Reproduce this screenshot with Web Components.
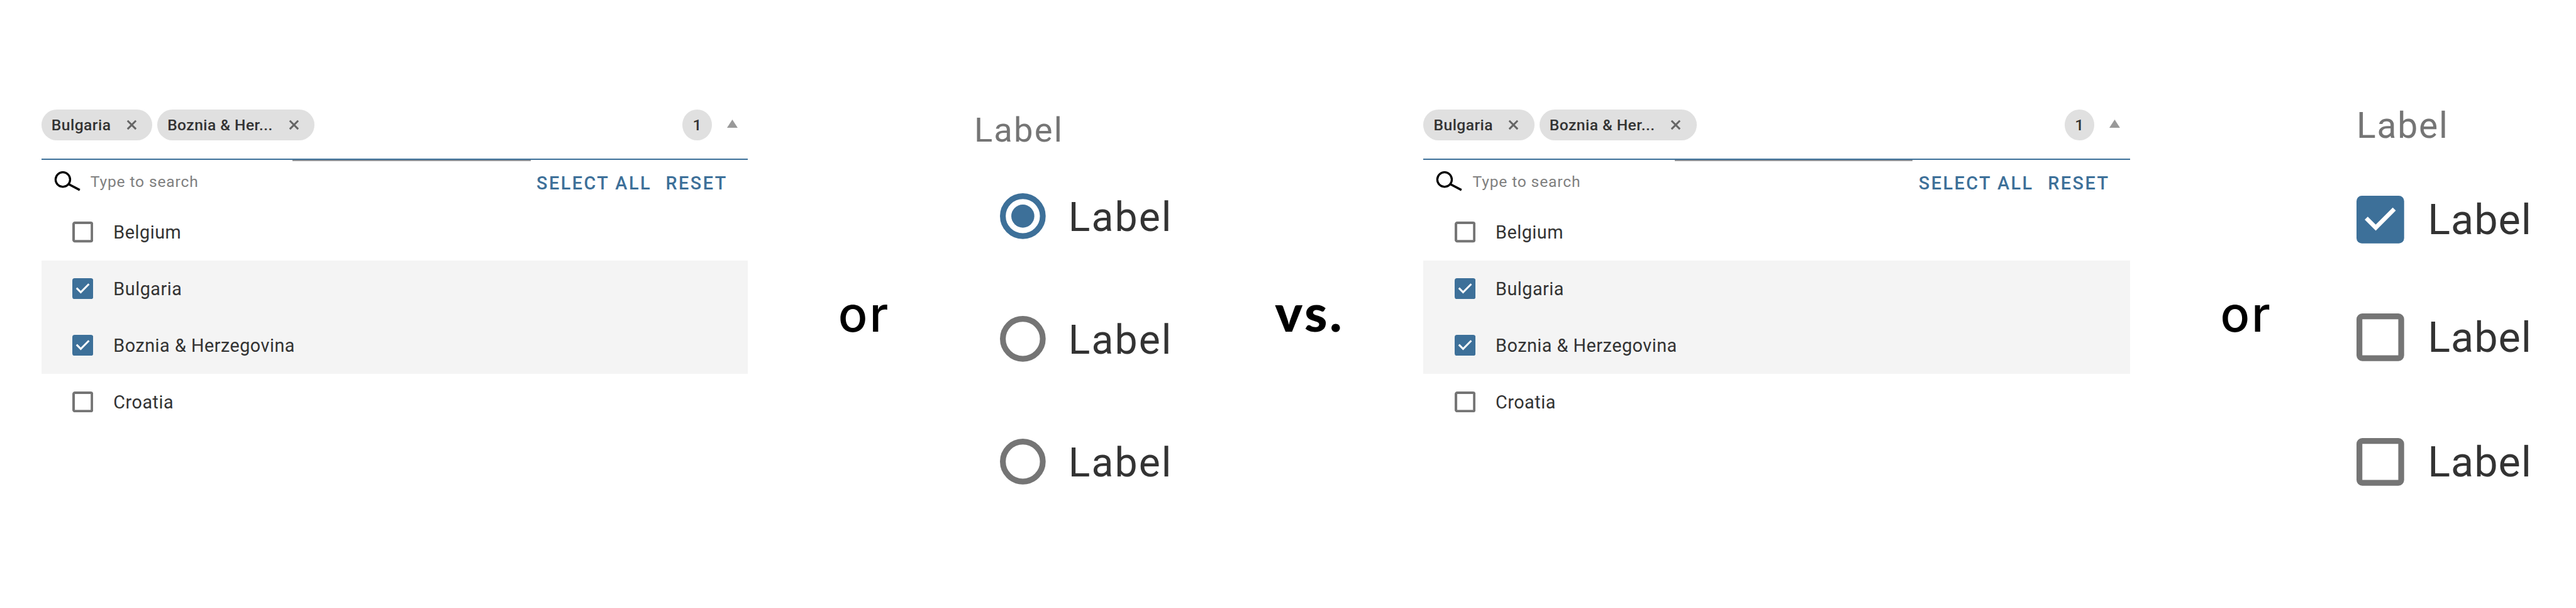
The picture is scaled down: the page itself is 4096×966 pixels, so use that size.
<!DOCTYPE html>
<html lang="en">
  <head>
    <meta charset="utf-8" />
    <title>Multiple vs. single selection</title>
    <style>
      html,
      body {
        margin: 0;
        background: #fff;
        overflow: hidden;
      }
      body {
        font-family: Roboto, sans-serif;
        color: #333;
        --primary: #3d7099;
        --outline: #757575;
      }
    </style>
  </head>
  <body>
    <comparison-board>
      <country-select></country-select>
      <join-word style="--left: 144px">or</join-word>
      <choice-group type="radio" style="--left: 137px"></choice-group>
      <join-word strong style="--left: 167.3px">vs.</join-word>
      <country-select style="--left: 132px"></country-select>
      <join-word style="--left: 144px">or</join-word>
      <choice-group type="checkbox" style="--left: 137.3px"></choice-group>
    </comparison-board>

    <script>
      class ComparisonBoard extends HTMLElement {
        constructor() {
          super();
          this.attachShadow({ mode: "open" }).innerHTML = `
            <style>
              :host {
                display: flex;
                align-items: flex-start;
                box-sizing: border-box;
                width: 4112px;
                height: 970px;
                padding-left: 66px;
                zoom: 0.99611;
              }
            </style>
            <slot></slot>
          `;
        }
      }

      class JoinWord extends HTMLElement {
        constructor() {
          super();
          this.attachShadow({ mode: "open" }).innerHTML = `
            <style>
              :host {
                flex: none;
                width: 80px;
                margin: 451.4px 0 0 var(--left, 0);
                font: 550 77.5px/100px Inter, sans-serif;
                letter-spacing: 3px;
                color: #000;
                white-space: nowrap;
              }
              :host([strong]) {
                width: 105px;
                margin-top: 447.3px;
                font: 900 83px/100px Lato, sans-serif;
                letter-spacing: 3.6px;
              }
            </style>
            <slot></slot>
          `;
        }
      }

      class CheckBox extends HTMLElement {
        constructor() {
          super();
          this.attachShadow({ mode: "open" }).innerHTML = `
            <style>
              :host {
                display: block;
                flex: none;
                width: var(--box, 33.4px);
                height: var(--box, 33.4px);
              }
              svg {
                display: block;
                width: 100%;
                height: 100%;
              }
              .on {
                display: none;
              }
              :host([checked]) .on {
                display: inline;
              }
              :host([checked]) .off {
                display: none;
              }
            </style>
            <svg viewBox="0 0 76 76">
              <rect class="off" x="4.65" y="4.65" width="66.7" height="66.7" rx="4.5" fill="#fff" stroke="var(--outline)" stroke-width="9.3" />
              <g class="on">
                <rect width="76" height="76" rx="8.5" fill="var(--primary)" />
                <path d="M15.5 35.7L30.7 50.9L60.3 21.2" fill="none" stroke="#fff" stroke-width="6.9" />
              </g>
            </svg>
          `;
        }
      }

      class RadioButton extends HTMLElement {
        constructor() {
          super();
          this.attachShadow({ mode: "open" }).innerHTML = `
            <style>
              :host {
                display: block;
                flex: none;
                width: 73px;
                height: 73px;
                color: var(--outline);
              }
              :host([checked]) {
                color: var(--primary);
              }
              svg {
                display: block;
              }
              .dot {
                display: none;
              }
              :host([checked]) .dot {
                display: inline;
              }
            </style>
            <svg width="73" height="73" viewBox="0 0 73 73">
              <circle cx="36.5" cy="36.5" r="31.9" fill="none" stroke="currentColor" stroke-width="9.2" />
              <circle class="dot" cx="36.5" cy="36.5" r="18.4" fill="currentColor" />
            </svg>
          `;
        }
      }

      class FilterChip extends HTMLElement {
        constructor() {
          super();
          this.attachShadow({ mode: "open" }).innerHTML = `
            <style>
              :host {
                display: flex;
                align-items: center;
                justify-content: space-between;
                box-sizing: border-box;
                height: 49px;
                padding: 0 24.5px 0 16.2px;
                border-radius: 24.5px;
                background: #e0e0e0;
                font: 500 24.75px/40px Roboto, sans-serif;
                letter-spacing: 0.43px;
                white-space: nowrap;
              }
              span {
                margin-top: 2px;
              }
            </style>
            <span><slot></slot></span>
            <svg width="17" height="17" viewBox="0 0 17 17">
              <path d="M1.8 1.8L15.2 15.2M15.2 1.8L1.8 15.2" stroke="#666" stroke-width="3" />
            </svg>
          `;
        }
      }

      class CountryOption extends HTMLElement {
        constructor() {
          super();
          this.attachShadow({ mode: "open" }).innerHTML = `
            <style>
              :host {
                display: flex;
                align-items: center;
                box-sizing: border-box;
                height: 90.3px;
                padding-left: 49.3px;
                gap: 32.4px;
                font-size: 28.9px;
                line-height: 40px;
                letter-spacing: 0.5px;
              }
              :host([checked]) {
                background: #f4f4f4;
              }
              span {
                margin-top: 2px;
              }
            </style>
            <check-box></check-box>
            <span><slot></slot></span>
          `;
          this.shadowRoot.querySelector("check-box").toggleAttribute("checked", this.hasAttribute("checked"));
        }
      }

      class CountrySelect extends HTMLElement {
        constructor() {
          super();
          this.attachShadow({ mode: "open" }).innerHTML = `
            <style>
              :host {
                display: block;
                flex: none;
                width: 1128px;
                margin: 174.7px 0 0 var(--left, 0);
              }
              .field {
                display: flex;
                gap: 8px;
                height: 78.5px;
              }
              .badge {
                width: 47.5px;
                height: 49px;
                margin-left: auto;
                border-radius: 50%;
                background: #e0e0e0;
                font: 500 24.75px/51px Roboto, sans-serif;
                text-align: center;
              }
              .arrow {
                margin: 16px 16.3px 0 16px;
              }
              .line {
                height: 4px;
              }
              .line::before {
                content: "";
                display: block;
                height: 2px;
                background: var(--primary);
              }
              .line::after {
                content: "";
                display: block;
                width: 380px;
                height: 2px;
                margin-left: 401px;
                background: #929497;
              }
              .search {
                display: flex;
                align-items: flex-start;
                height: 68px;
                padding-left: 20px;
              }
              .search svg {
                margin-top: 15px;
              }
              .hint {
                margin: 13px auto 0 15.4px;
                font-size: 24.75px;
                line-height: 40px;
                letter-spacing: 0.83px;
                color: #808080;
              }
              .action {
                margin-top: 16px;
                font-size: 28.9px;
                font-weight: 500;
                line-height: 40px;
                letter-spacing: 2.5px;
                color: var(--primary);
              }
              .all {
                margin-right: 22.6px;
              }
              .reset {
                margin-right: 32.7px;
              }
            </style>
            <div class="field">
              <filter-chip style="width: 177px">Bulgaria</filter-chip>
              <filter-chip style="width: 251px">Boznia &amp; Her...</filter-chip>
              <span class="badge">1</span>
              <svg class="arrow" width="17" height="13" viewBox="0 0 17 13">
                <path d="M8.5 0L17 13H0Z" fill="#999" />
              </svg>
            </div>
            <div class="line"></div>
            <div class="search">
              <svg width="43" height="34" viewBox="0 0 43 34" fill="none" stroke="#000">
                <circle cx="14" cy="14.3" r="11.6" stroke-width="3.3" />
                <path d="M23.5 21.8L41 31" stroke-width="3.5" />
              </svg>
              <span class="hint">Type to search</span>
              <span class="action all">SELECT ALL</span>
              <span class="action reset">RESET</span>
            </div>
            <country-option>Belgium</country-option>
            <country-option checked>Bulgaria</country-option>
            <country-option checked>Boznia &amp; Herzegovina</country-option>
            <country-option>Croatia</country-option>
          `;
        }
      }

      class ChoiceGroup extends HTMLElement {
        constructor() {
          super();
          const tag = this.getAttribute("type") === "radio" ? "radio-button" : "check-box";
          const row = (state) => `<div class="row"><${tag} ${state}></${tag}><span>Label</span></div>`;
          this.attachShadow({ mode: "open" }).innerHTML = `
            <style>
              :host {
                display: block;
                flex: none;
                width: 313px;
                margin-left: var(--left, 0);
              }
              .title {
                margin-top: 167.6px;
                font-size: 54.5px;
                line-height: 80px;
                letter-spacing: 2.2px;
                color: #757575;
              }
              .list {
                display: grid;
                grid-template-rows: 196px 196px 73px;
                padding: 60.6px 0 0 41.5px;
              }
              .row {
                display: flex;
                align-items: center;
                gap: 36px;
                height: 73px;
                font-size: 64.5px;
                line-height: 68px;
                letter-spacing: 2.1px;
              }
              .row span {
                margin-top: 5px;
              }
              :host([type="checkbox"]) {
                width: 350px;
                --box: 76px;
              }
              :host([type="checkbox"]) .title {
                margin-top: 160.2px;
                font-size: 57.2px;
                letter-spacing: 1.8px;
              }
              :host([type="checkbox"]) .list {
                grid-template-rows: 187.5px 199.1px 76px;
                padding: 72.2px 0 0;
              }
              :host([type="checkbox"]) .row {
                gap: 37.7px;
                height: 76px;
                font-size: 66.7px;
                letter-spacing: 1.05px;
              }
              :host([type="checkbox"]) .row span {
                margin-top: 2px;
              }
            </style>
            <div class="title">Label</div>
            <div class="list">${row("checked")}${row("")}${row("")}</div>
          `;
        }
      }

      customElements.define("check-box", CheckBox);
      customElements.define("radio-button", RadioButton);
      customElements.define("filter-chip", FilterChip);
      customElements.define("country-option", CountryOption);
      customElements.define("country-select", CountrySelect);
      customElements.define("choice-group", ChoiceGroup);
      customElements.define("join-word", JoinWord);
      customElements.define("comparison-board", ComparisonBoard);
    </script>
  </body>
</html>
